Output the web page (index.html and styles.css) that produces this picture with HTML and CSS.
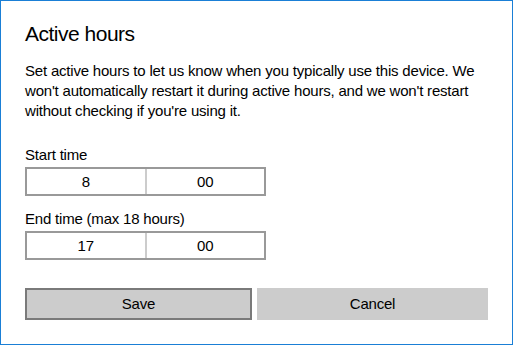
FILE: index.html
```html
<!DOCTYPE html>
<html>
<head>
<meta charset="utf-8">
<link rel="stylesheet" href="styles.css">
</head>
<body>
<div class="window">
  <h1 class="title">Active hours</h1>
  <p class="desc">Set active hours to let us know when you typically use this device. We won't automatically restart it during active hours, and we won't restart without checking if you're using it.</p>
  <div class="field field-start">
    <div class="label">Start time</div>
    <div class="picker">
      <div class="cell">8</div>
      <div class="cell">00</div>
    </div>
  </div>
  <div class="field field-end">
    <div class="label">End time (max 18 hours)</div>
    <div class="picker">
      <div class="cell">17</div>
      <div class="cell">00</div>
    </div>
  </div>
  <div class="buttons">
    <div class="btn btn-primary">Save</div>
    <div class="btn">Cancel</div>
  </div>
</div>
</body>
</html>
```
FILE: styles.css
```css
html, body {
  margin: 0;
  padding: 0;
  background: #fff;
}
.window {
  box-sizing: border-box;
  width: 513px;
  height: 345px;
  border: 1px solid #1a7fd6;
  padding: 0 22px 0 24px;
  font-family: "Liberation Sans", Arial, sans-serif;
  color: #000;
  font-size: 15px;
  letter-spacing: -0.2px;
}
.title {
  margin: 0;
  padding-top: 19px;
  font-size: 21px;
  font-weight: normal;
  line-height: 28px;
  letter-spacing: -0.5px;
  color: #000;
}
.desc {
  margin: 13px 0 0;
  line-height: 20px;
}
.field-start {
  margin-top: 24px;
}
.field-end {
  margin-top: 13px;
}
.label {
  line-height: 20px;
}
.picker {
  display: flex;
  width: 241px;
  height: 29px;
  box-sizing: border-box;
  border: 2px solid #999;
  margin-top: 2px;
}
.cell {
  flex: 1;
  text-align: center;
  line-height: 25px;
}
.cell + .cell {
  border-left: 2px solid #ccc;
}
.buttons {
  display: flex;
  gap: 5px;
  margin-top: 28px;
}
.btn {
  box-sizing: border-box;
  width: 231px;
  height: 32px;
  background: #ccc;
  text-align: center;
  line-height: 31px;
}
.btn-primary {
  width: 227px;
  border: 2px solid #7a7a7a;
  line-height: 27px;
}
```
